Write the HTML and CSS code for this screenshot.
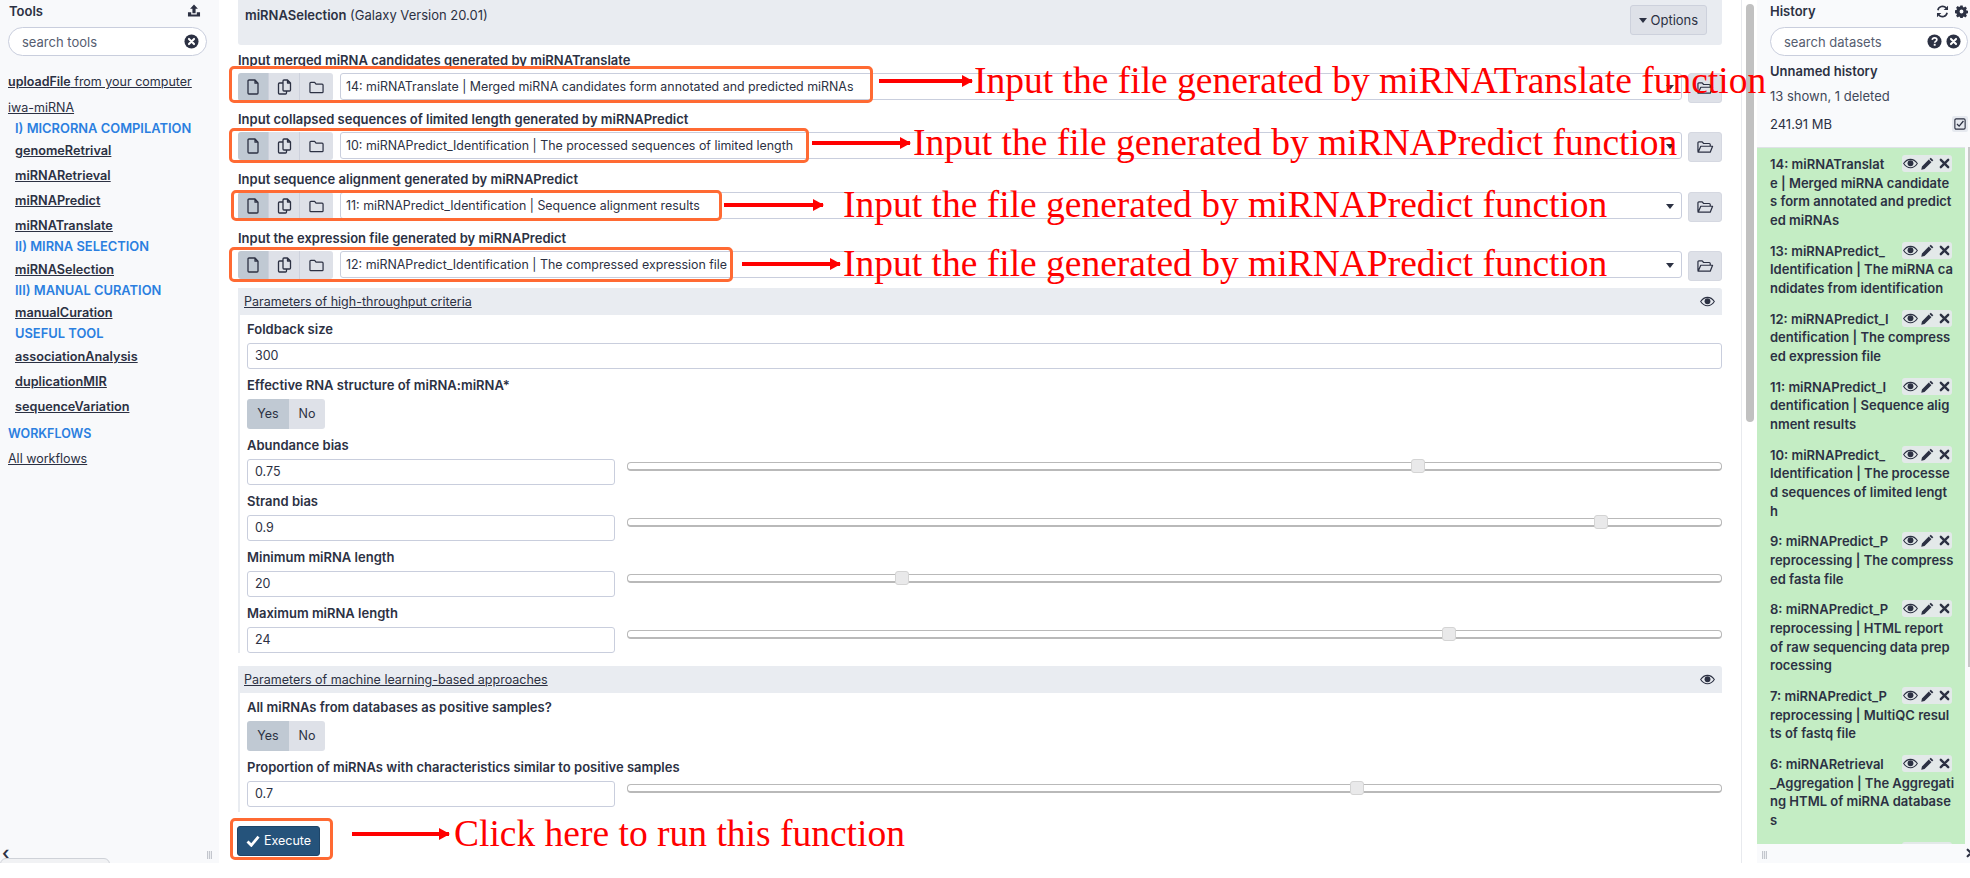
FILE: index.html
```html
<!DOCTYPE html>
<html lang="en">
<head>
<meta charset="utf-8">
<title>miRNASelection</title>
<link rel="stylesheet" href="styles.css">
</head>
<body>
<svg class="defs" width="0" height="0" aria-hidden="true">
  <symbol id="i-file" viewBox="0 0 12 16"><path d="M1.5 1h6l3 3.2V14a1 1 0 0 1-1 1h-8a1 1 0 0 1-1-1V2a1 1 0 0 1 1-1zM7.5 1v3.2h3" fill="none" stroke="currentColor" stroke-width="1.3" stroke-linejoin="round"/></symbol>
  <symbol id="i-copy" viewBox="0 0 14 16"><path d="M6.5 1h3.5l3 3v7a1 1 0 0 1-1 1H6.500a1 1 0 0 1-1-1V2a1 1 0 0 1 1-1zM10 1v3h3M5.500 4H2a1 1 0 0 0-1 1v9a1 1 0 0 0 1 1h6a1 1 0 0 0 1-1v-2" fill="none" stroke="currentColor" stroke-width="1.300" stroke-linejoin="round"/></symbol>
  <symbol id="i-folder" viewBox="0 0 16 14"><path d="M2 2h4l1.500 2H14a1 1 0 0 1 1 1v7a1 1 0 0 1-1 1H2a1 1 0 0 1-1-1V3a1 1 0 0 1 1-1z" fill="none" stroke="currentColor" stroke-width="1.300" stroke-linejoin="round"/></symbol>
  <symbol id="i-open" viewBox="0 0 18 14"><path d="M1 12V2.500a1 1 0 0 1 1-1h3.500L7 3.300h6a1 1 0 0 1 1 1V6M1.200 12.500 4 6.200h12.500L14 12.500z" fill="none" stroke="currentColor" stroke-width="1.300" stroke-linejoin="round"/></symbol>
  <symbol id="i-eye" viewBox="0 0 18 12"><path d="M.8 6C3 2.700 5.800 1 9 1s6 1.700 8.200 5C15 9.300 12.200 11 9 11S3 9.300.8 6z" fill="none" stroke="currentColor" stroke-width="1.300"/><circle cx="9" cy="5.700" r="3.500" fill="currentColor"/></symbol>
  <symbol id="i-pen" viewBox="0 0 14 14"><path d="M10.500.7l2.800 2.800-1.400 1.400-2.800-2.800zM8.400 2.800l2.800 2.800-7.400 7.400-3.500.7.700-3.500z" fill="currentColor"/></symbol>
  <symbol id="i-x" viewBox="0 0 12 12"><path d="M2 2l8 8M10 2l-8 8" stroke="currentColor" stroke-width="2.600" stroke-linecap="round" fill="none"/></symbol>
  <symbol id="i-refresh" viewBox="0 0 16 16"><path d="M2.300 6.500A6 6 0 0 1 12.500 3.500M13.700 9.500A6 6 0 0 1 3.500 12.500" fill="none" stroke="currentColor" stroke-width="2"/><path d="M14.800.8v5.400H9.400zM1.200 15.200V9.800h5.400z" fill="currentColor"/></symbol>
  <symbol id="i-cog" viewBox="0 0 16 16"><path fill-rule="evenodd" d="M6.600.5h2.800l.4 2 1.200.5 1.700-1.100 2 2-1.100 1.700.5 1.200 2 .4v2.800l-2 .4-.5 1.200 1.100 1.700-2 2-1.700-1.100-1.200.5-.4 2H6.600l-.4-2-1.200-.5-1.700 1.100-2-2 1.100-1.700-.5-1.200-2-.4V6.600l2-.4.500-1.200-1.100-1.700 2-2 1.700 1.100 1.200-.5zM8 5.600a2.400 2.400 0 1 0 0 4.800 2.400 2.400 0 0 0 0-4.800z" fill="currentColor"/></symbol>
  <symbol id="i-xc" viewBox="0 0 16 16"><circle cx="8" cy="8" r="7.500" fill="currentColor"/><path d="M5.300 5.300l5.400 5.400M10.700 5.300l-5.400 5.400" stroke="#fff" stroke-width="2.200" stroke-linecap="round"/></symbol>
  <symbol id="i-help" viewBox="0 0 16 16"><circle cx="8" cy="8" r="7.500" fill="currentColor"/><path d="M5.600 6.200C5.800 4.800 6.800 4.100 8.100 4.100c1.400 0 2.400.8 2.400 2 0 1.700-2.300 1.700-2.300 3.300" stroke="#fff" stroke-width="1.800" fill="none"/><rect x="7.200" y="10.500" width="2" height="2" fill="#fff"/></symbol>
  <symbol id="i-upload" viewBox="0 0 14 14"><path d="M7 .5l4.200 4.500H8.700v5H5.300V5H2.800zM.5 9h3.500v2.200h6V9h3.500v4.500H.5z" fill="currentColor"/></symbol>
  <symbol id="i-check" viewBox="0 0 14 12"><path d="M1.500 6.500l3.800 3.800 7.200-8.600" fill="none" stroke="currentColor" stroke-width="2.800"/></symbol>
  <symbol id="i-checkbox" viewBox="0 0 14 14"><rect x="1" y="1" width="12" height="12" rx="1.500" fill="none" stroke="currentColor" stroke-width="1.300"/><path d="M3.500 7l2.500 2.500 5-6" fill="none" stroke="currentColor" stroke-width="1.500"/></symbol>
</svg>

<div class="app">
  <aside class="tools">
    <div class="panel-head"><strong>Tools</strong><svg class="ic ic-upload"><use href="#i-upload"/></svg></div>
    <div class="search"><span>search tools</span><svg class="ic ic-round"><use href="#i-xc"/></svg></div>
    <div class="tool-list">
      <a class="top-link upload"><b>uploadFile</b> from your computer</a>
      <a class="top-link">iwa-miRNA</a>
      <div class="section">I) MICRORNA COMPILATION</div>
      <a class="tool">genomeRetrival</a>
      <a class="tool">miRNARetrieval</a>
      <a class="tool">miRNAPredict</a>
      <a class="tool">miRNATranslate</a>
      <div class="section">II) MIRNA SELECTION</div>
      <a class="tool">miRNASelection</a>
      <div class="section">III) MANUAL CURATION</div>
      <a class="tool">manualCuration</a>
      <div class="section">USEFUL TOOL</div>
      <a class="tool">associationAnalysis</a>
      <a class="tool">duplicationMIR</a>
      <a class="tool">sequenceVariation</a>
      <div class="section outer workflows">WORKFLOWS</div>
      <a class="top-link all">All workflows</a>
    </div>
    <span class="chev">‹</span>
    <span class="grip"></span>
    <span class="pill"></span>
  </aside>

  <main class="center">
    <header class="form-head">
      <div><strong>miRNASelection</strong> (Galaxy Version 20.01)</div>
      <button class="opt-btn"><i class="caret"></i> Options</button>
    </header>

    <div class="input-item">
      <div class="input-label">Input merged miRNA candidates generated by miRNATranslate</div>
      <div class="input-row">
        <div class="seg"><span class="active"><svg class="ic"><use href="#i-file"/></svg></span><span><svg class="ic"><use href="#i-copy"/></svg></span><span><svg class="ic"><use href="#i-folder"/></svg></span></div>
        <div class="select">14: miRNATranslate | Merged miRNA candidates form annotated and predicted miRNAs<i class="caret"></i></div>
        <button class="folder"><svg class="ic"><use href="#i-open"/></svg></button>
      </div>
    </div>
    <div class="input-item">
      <div class="input-label">Input collapsed sequences of limited length generated by miRNAPredict</div>
      <div class="input-row">
        <div class="seg"><span class="active"><svg class="ic"><use href="#i-file"/></svg></span><span><svg class="ic"><use href="#i-copy"/></svg></span><span><svg class="ic"><use href="#i-folder"/></svg></span></div>
        <div class="select">10: miRNAPredict_Identification | The processed sequences of limited length<i class="caret"></i></div>
        <button class="folder"><svg class="ic"><use href="#i-open"/></svg></button>
      </div>
    </div>
    <div class="input-item">
      <div class="input-label">Input sequence alignment generated by miRNAPredict</div>
      <div class="input-row">
        <div class="seg"><span class="active"><svg class="ic"><use href="#i-file"/></svg></span><span><svg class="ic"><use href="#i-copy"/></svg></span><span><svg class="ic"><use href="#i-folder"/></svg></span></div>
        <div class="select">11: miRNAPredict_Identification | Sequence alignment results<i class="caret"></i></div>
        <button class="folder"><svg class="ic"><use href="#i-open"/></svg></button>
      </div>
    </div>
    <div class="input-item">
      <div class="input-label">Input the expression file generated by miRNAPredict</div>
      <div class="input-row">
        <div class="seg"><span class="active"><svg class="ic"><use href="#i-file"/></svg></span><span><svg class="ic"><use href="#i-copy"/></svg></span><span><svg class="ic"><use href="#i-folder"/></svg></span></div>
        <div class="select">12: miRNAPredict_Identification | The compressed expression file<i class="caret"></i></div>
        <button class="folder"><svg class="ic"><use href="#i-open"/></svg></button>
      </div>
    </div>

    <section class="param-panel">
      <div class="param-head"><u>Parameters of high-throughput criteria</u><svg class="ic ic-eye"><use href="#i-eye"/></svg></div>
      <div class="param-body">
        <div class="field"><div class="field-label">Foldback size</div><div class="text-input">300</div></div>
        <div class="field"><div class="field-label">Effective RNA structure of miRNA:miRNA*</div><div class="toggle"><span class="on">Yes</span><span>No</span></div></div>
        <div class="field"><div class="field-label">Abundance bias</div><div class="slider-row"><div class="text-input short">0.75</div><div class="slider"><span class="handle" style="left:71.6%"></span></div></div></div>
        <div class="field"><div class="field-label">Strand bias</div><div class="slider-row"><div class="text-input short">0.9</div><div class="slider"><span class="handle" style="left:88.4%"></span></div></div></div>
        <div class="field"><div class="field-label">Minimum miRNA length</div><div class="slider-row"><div class="text-input short">20</div><div class="slider"><span class="handle" style="left:24.4%"></span></div></div></div>
        <div class="field"><div class="field-label">Maximum miRNA length</div><div class="slider-row"><div class="text-input short">24</div><div class="slider"><span class="handle" style="left:74.5%"></span></div></div></div>
      </div>
    </section>

    <section class="param-panel second">
      <div class="param-head"><u>Parameters of machine learning-based approaches</u><svg class="ic ic-eye"><use href="#i-eye"/></svg></div>
      <div class="param-body">
        <div class="field"><div class="field-label">All miRNAs from databases as positive samples?</div><div class="toggle"><span class="on">Yes</span><span>No</span></div></div>
        <div class="field last"><div class="field-label">Proportion of miRNAs with characteristics similar to positive samples</div><div class="slider-row"><div class="text-input short">0.7</div><div class="slider"><span class="handle" style="left:66.1%"></span></div></div></div>
      </div>
    </section>

    <button class="execute"><svg class="ic ic-check"><use href="#i-check"/></svg> Execute</button>
  </main>

  <div class="gutter"><span class="thumb"></span></div>

  <aside class="history">
    <div class="panel-head"><strong>History</strong><span class="head-icons"><svg class="ic ic-h"><use href="#i-refresh"/></svg><svg class="ic ic-h"><use href="#i-cog"/></svg></span></div>
    <div class="search hist-search"><span>search datasets</span><span class="search-icons"><svg class="ic ic-round"><use href="#i-help"/></svg><svg class="ic ic-round"><use href="#i-xc"/></svg></span></div>
    <div class="hist-name">Unnamed history</div>
    <div class="hist-count">13 shown, 1 deleted</div>
    <div class="hist-size"><span>241.91 MB</span><span class="check-btn"><svg class="ic"><use href="#i-checkbox"/></svg></span></div>
    <div class="datasets">
      <div class="ds"><span class="ds-ops"><svg class="ic o-eye"><use href="#i-eye"/></svg><svg class="ic o-pen"><use href="#i-pen"/></svg><svg class="ic o-x"><use href="#i-x"/></svg></span>14: miRNATranslat<br>e | Merged miRNA candidate<br>s form annotated and predict<br>ed miRNAs</div>
      <div class="ds"><span class="ds-ops"><svg class="ic o-eye"><use href="#i-eye"/></svg><svg class="ic o-pen"><use href="#i-pen"/></svg><svg class="ic o-x"><use href="#i-x"/></svg></span>13: miRNAPredict_<br>Identification | The miRNA ca<br>ndidates from identification</div>
      <div class="ds"><span class="ds-ops"><svg class="ic o-eye"><use href="#i-eye"/></svg><svg class="ic o-pen"><use href="#i-pen"/></svg><svg class="ic o-x"><use href="#i-x"/></svg></span>12: miRNAPredict_I<br>dentification | The compress<br>ed expression file</div>
      <div class="ds"><span class="ds-ops"><svg class="ic o-eye"><use href="#i-eye"/></svg><svg class="ic o-pen"><use href="#i-pen"/></svg><svg class="ic o-x"><use href="#i-x"/></svg></span>11: miRNAPredict_I<br>dentification | Sequence alig<br>nment results</div>
      <div class="ds"><span class="ds-ops"><svg class="ic o-eye"><use href="#i-eye"/></svg><svg class="ic o-pen"><use href="#i-pen"/></svg><svg class="ic o-x"><use href="#i-x"/></svg></span>10: miRNAPredict_<br>Identification | The processe<br>d sequences of limited lengt<br>h</div>
      <div class="ds"><span class="ds-ops"><svg class="ic o-eye"><use href="#i-eye"/></svg><svg class="ic o-pen"><use href="#i-pen"/></svg><svg class="ic o-x"><use href="#i-x"/></svg></span>9: miRNAPredict_P<br>reprocessing | The compress<br>ed fasta file</div>
      <div class="ds"><span class="ds-ops"><svg class="ic o-eye"><use href="#i-eye"/></svg><svg class="ic o-pen"><use href="#i-pen"/></svg><svg class="ic o-x"><use href="#i-x"/></svg></span>8: miRNAPredict_P<br>reprocessing | HTML report<br>of raw sequencing data prep<br>rocessing</div>
      <div class="ds"><span class="ds-ops"><svg class="ic o-eye"><use href="#i-eye"/></svg><svg class="ic o-pen"><use href="#i-pen"/></svg><svg class="ic o-x"><use href="#i-x"/></svg></span>7: miRNAPredict_P<br>reprocessing | MultiQC resul<br>ts of fastq file</div>
      <div class="ds"><span class="ds-ops"><svg class="ic o-eye"><use href="#i-eye"/></svg><svg class="ic o-pen"><use href="#i-pen"/></svg><svg class="ic o-x"><use href="#i-x"/></svg></span>6: miRNARetrieval<br>_Aggregation | The Aggregati<br>ng HTML of miRNA database<br>s</div>
      <div class="ds"><span class="ds-ops"></span></div>
    </div>
    <span class="hist-scroll"></span>
    <div class="hist-foot"><span class="grip"></span><svg class="ic foot-x"><use href="#i-x"/></svg></div>
  </aside>

  <div class="callout box1"></div>
  <div class="callout box2"></div>
  <div class="callout box3"></div>
  <div class="callout box4"></div>
  <div class="callout box5"></div>

  <div class="note n1"><span class="arrow a1"></span><span class="note-text">Input the file generated by miRNATranslate function</span></div>
  <div class="note n2"><span class="arrow a2"></span><span class="note-text">Input the file generated by miRNAPredict function</span></div>
  <div class="note n3"><span class="arrow a3"></span><span class="note-text">Input the file generated by miRNAPredict function</span></div>
  <div class="note n4"><span class="arrow a4"></span><span class="note-text">Input the file generated by miRNAPredict function</span></div>
  <div class="note n5"><span class="arrow a5"></span><span class="note-text">Click here to run this function</span></div>
</div>
</body>
</html>
```

FILE: styles.css
```css
* { box-sizing: border-box; }
html, body { margin: 0; padding: 0; background: #fff; overflow: hidden; }
body { font-family: Inter, "Open Sans", sans-serif; font-size: 13px; color: #2c3143; }
.defs { position: absolute; }
.ic { display: inline-block; width: 14px; height: 14px; color: #2c3143; flex: none; }

.app { position: relative; display: flex; height: 863px; width: 1970px; overflow: hidden; }

/* left panel */
.tools { position: relative; width: 219px; flex: none; background: #f8f9fb; padding: 0 12px 0 8px; }
.panel-head { display: flex; justify-content: space-between; align-items: center; height: 22px; font-size: 13px; }
.panel-head strong { font-weight: 600; }
.tools .panel-head { padding-left: 1px; }
.ic-upload { width: 14px; height: 13px; margin: -1px 6px 0 0; }
.search { display: flex; justify-content: space-between; align-items: center; height: 29px; margin-top: 5px; padding: 0 7px 0 13px; background: #fff; border: 1px solid #c9cedd; border-radius: 15px; font-size: 13px; color: #565d70; width: 199px; }
.ic-round { width: 15px; height: 15px; }
.tool-list { display: flex; flex-direction: column; align-items: flex-start; margin-top: 15px; font-size: 12.5px; line-height: 21.7px; }
.top-link { text-decoration: underline; color: #2c3143; }
.top-link b { font-weight: 600; }
.upload { margin-bottom: 4.3px; }
.section { margin: -1px 0 1px 7px; font-size: 12.9px; color: #2b7fe0; font-weight: 600; }
.section.outer { margin-left: 0; font-size: 12.5px; }
.section.workflows { margin-top: 5.3px; margin-bottom: 3.3px; }
.tool { margin-left: 7px; font-size: 12.7px; font-weight: 600; text-decoration: underline; color: #2c3143; }
.tool + .tool { margin-top: 3.3px; }
.chev { position: absolute; left: 2px; top: 843px; font-size: 18px; line-height: 20px; font-weight: 600; }
.grip { position: absolute; left: 207px; top: 851px; width: 5px; height: 8px; background: repeating-linear-gradient(90deg, #c3c6cd 0 1px, #eceef1 1px 2px); }
.pill { position: absolute; left: 0; top: 858px; width: 110px; height: 14px; border: 1px solid #cfd2d8; border-radius: 6px; background: #f1f2f4; }

/* centre */
.center { width: 1523px; flex: none; padding: 0 19px; border-right: 1px solid #e8eaee; font-size: 12.5px; }
.form-head { display: flex; justify-content: space-between; height: 45px; padding: 5px 15px 0 7px; background: #e9ecf1; border-radius: 0 0 3px 3px; margin-bottom: 5px; font-size: 13px; }
.form-head strong { font-weight: 600; }
.form-head > div { line-height: 20px; }
.opt-btn { width: 77px; height: 30px; padding: 0; background: #dee1e8; border: 1px solid #cdd1dc; border-radius: 3px; font: inherit; color: #2c3143; }
.caret { display: inline-block; width: 0; height: 0; border: 4px solid transparent; border-top: 5px solid #2c3143; border-bottom: 0; vertical-align: 2px; }

.input-item { height: 59.33px; }
.input-label { height: 23px; line-height: 20px; font-size: 13px; font-weight: 600; color: #2c3143; }
.input-row { display: flex; align-items: flex-start; height: 30px; }
.seg { display: flex; height: 28px; width: 95px; margin-right: 7px; }
.seg span { display: flex; justify-content: center; align-items: center; background: #dee1e8; border-right: 1px solid #cdd1dc; width: 31px; }
.seg span:last-child { border-right: 0; width: 33px; border-radius: 0 3px 3px 0; }
.seg .active { background: #c0c9d3; border-radius: 3px 0 0 3px; }
.seg .ic { width: 15px; height: 16px; }
.select { position: relative; width: 1343px; height: 27px; padding: 0 0 0 5px; margin-right: 6px; font-size: 12.4px; line-height: 25px; background: #fff; border: 1px solid #c9cedd; border-radius: 3px; white-space: nowrap; color: #2c3143; }
.select .caret { position: absolute; right: 7px; top: 11px; }
.folder { width: 34px; height: 30px; padding: 0; background: #dee1e8; border: 1px solid #d5d8e1; border-radius: 3px; display: flex; align-items: center; justify-content: center; }
.folder .ic { width: 17px; height: 14px; }

.param-panel { margin-top: .67px; border-left: 2px solid #e9ecf1; }
.param-panel.second { margin-top: 13px; }
.param-head { display: flex; justify-content: space-between; align-items: center; height: 27px; margin-left: -2px; padding: 0 7px 0 6px; background: #e9ecf1; font-size: 12.5px; border-radius: 3px 3px 0 0; }
.ic-eye { width: 15px; height: 11px; }
.param-body { padding: 4px 0 0 7px; }
.field { margin-bottom: 6px; }
.field.last { margin-bottom: 0; padding-bottom: 5px; }
.field-label { height: 24px; line-height: 20px; font-size: 13px; font-weight: 600; }
.text-input { height: 26px; line-height: 24px; padding-left: 7px; background: #fff; border: 1px solid #c9cedd; border-radius: 3px; }
.text-input.short { width: 368px; flex: none; }
.slider-row { display: flex; }
.slider { position: relative; flex: 1; height: 9px; margin: 3px 0 0 12px; background: #fff; border: 1px solid #b9b9b9; border-width: 1px 1px 2px; border-radius: 4px; }
.handle { position: absolute; top: -4px; width: 14px; height: 14px; background: #e9e9ea; border: 1px solid #d4d4d4; border-radius: 3px; }
.toggle { display: inline-flex; height: 30px; line-height: 30px; vertical-align: top; }
.toggle span { width: 36px; text-align: center; background: #dee1e8; border-radius: 0 3px 3px 0; }
.toggle .on { width: 42px; background: #c0c9d3; border-radius: 3px 0 0 3px; }

.execute { display: flex; align-items: center; justify-content: center; gap: 4px; width: 83px; height: 30px; margin-top: 14px; margin-left: -1px; padding: 0; background: #25537b; border: 1px solid #1e4568; border-radius: 3px; color: #fff; font: inherit; }
.ic-check { width: 14px; height: 12px; color: #fff; }

.gutter { width: 15px; flex: none; padding: 4px 0 0 4px; }
.thumb { display: block; width: 8px; height: 418px; background: #c1c1c1; border-radius: 4px; }

/* history */
.history { width: 213px; flex: none; background: #f9fafc; position: relative; }
.history .panel-head { padding: 0 2px 0 13px; }
.head-icons { display: flex; gap: 6px; }
.ic-h { width: 13px; height: 13px; }
.hist-search { margin-left: 13px; width: 198px; padding-right: 6px; }
.search-icons { display: flex; gap: 4px; }
.hist-name { margin: 6px 0 0 13px; line-height: 18px; font-weight: 600; }
.hist-count { margin: 7px 0 0 13px; line-height: 18px; color: #41485a; }
.hist-size { display: flex; justify-content: space-between; align-items: center; height: 18px; margin: 10px 0 0 13px; padding-right: 2px; }
.check-btn { display: flex; align-items: center; justify-content: center; width: 16px; height: 16px; background: #e6e9ef; border-radius: 2px; }
.check-btn .ic { width: 12px; height: 12px; }
.datasets { height: 698px; width: 208px; margin-top: 14px; padding: 7px 11px 0 13px; background: #c4edc4; border-top: 1px solid #dfe2e7; overflow: hidden; }
.ds { font-size: 13px; font-weight: 600; line-height: 18.67px; white-space: nowrap; margin-bottom: 12px; color: #2c3143; }
.ds-ops { float: right; display: flex; align-items: center; gap: 3px; width: 50px; height: 17px; margin: 0 2px 0 6px; padding-left: 1px; background: #e3e9e9; border-radius: 3px; }
.o-eye { width: 15px; height: 11px; }
.o-pen { width: 13px; height: 13px; }
.o-x { width: 11px; height: 11px; margin-left: 2px; }
.hist-scroll { position: absolute; right: 0; top: 147px; width: 2px; height: 520px; background: #c8c8c8; }
.hist-foot { position: absolute; left: 0; right: 0; bottom: 0; height: 19px; background: #f9fafc; }
.hist-foot .grip { left: 5px; top: 7px; }
.foot-x { position: absolute; right: -6px; top: 4px; width: 10px; height: 10px; }

/* annotations on top of the screenshot */
.callout { position: absolute; border: 3px solid #ff6a33; border-radius: 5px; z-index: 2; }
.box1 { left: 229px; top: 66px; width: 644px; height: 37px; }
.box2 { left: 229px; top: 128px; width: 580px; height: 35px; }
.box3 { left: 231px; top: 190px; width: 491px; height: 31px; }
.box4 { left: 229px; top: 247px; width: 504px; height: 35px; }
.box5 { left: 230px; top: 818px; width: 103px; height: 42px; }

.note { position: absolute; display: flex; align-items: center; height: 44px; z-index: 3; color: #f00; }
.note-text { font-family: "Liberation Serif", serif; font-size: 37.5px; line-height: 44px; white-space: nowrap; }
.arrow { position: relative; display: block; height: 4px; background: #f00; flex: none; }
.arrow::after { content: ""; position: absolute; right: -1px; top: -4px; border-left: 11px solid #f00; border-top: 6px solid transparent; border-bottom: 6px solid transparent; }
.n1 { left: 879px; top: 59px; }
.n2 { left: 812px; top: 121px; }
.n3 { left: 724px; top: 183px; }
.n4 { left: 742px; top: 242px; }
.n5 { left: 352px; top: 812px; }
.a1 { width: 93px; margin-right: 2px; }
.a2 { width: 98px; margin-right: 3px; }
.a3 { width: 99px; margin-right: 20px; }
.a4 { width: 98px; margin-right: 3px; }
.a5 { width: 97px; margin-right: 5px; }
```
